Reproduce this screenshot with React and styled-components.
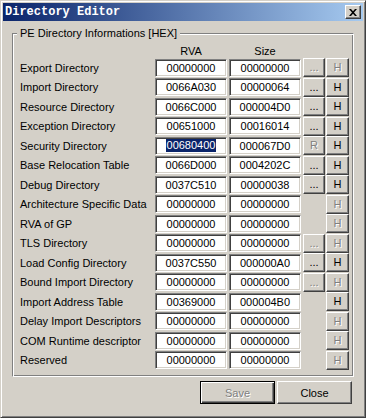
import React from 'react';
import styled, { createGlobalStyle } from 'styled-components';

const GlobalStyle = createGlobalStyle`
  html, body {
    margin: 0;
    padding: 0;
    background: #D4D0C8;
  }
  body {
    font-family: "Liberation Sans", Arial, sans-serif;
    font-size: 11px;
  }
`;

// classic window frame
const Window = styled.div`
  box-sizing: border-box;
  width: 366px;
  height: 418px;
  background: #D4D0C8;
  border: 1px solid;
  border-color: #D4D0C8 #404040 #404040 #D4D0C8;
  box-shadow: inset 1px 1px #fff, inset -1px -1px #808080;
  padding: 2px;
  display: flex;
  flex-direction: column;
`;

const TitleBar = styled.div`
  height: 18px;
  display: flex;
  align-items: center;
  justify-content: space-between;
  padding: 0 2px;
  background: linear-gradient(to right, #0A246A, #A6CAF0);
`;

const Title = styled.span`
  font-family: "Liberation Mono", "DejaVu Sans Mono", monospace;
  font-weight: bold;
  font-size: 12px;
  color: #fff;
`;

const CloseButton = styled.button`
  box-sizing: border-box;
  width: 16px;
  height: 14px;
  padding: 0;
  margin: 0;
  display: flex;
  align-items: center;
  justify-content: center;
  background: #D4D0C8;
  border: 1px solid;
  border-color: #fff #404040 #404040 #fff;
  box-shadow: inset -1px -1px #808080;
`;

const Body = styled.div`
  flex: 1;
  display: flex;
  flex-direction: column;
  padding: 6px 9px 0 9px;
`;

const GroupBox = styled.fieldset`
  margin: 0;
  padding: 0;
  min-width: 0;
  border: 1px solid;
  border-color: #808080 #fff #fff #808080;
  box-shadow: inset 1px 1px #fff, inset -1px -1px #808080;
`;

const Legend = styled.legend`
  margin-left: 4px;
  padding: 0 3px;
  line-height: 13px;
  font-size: 11px;
  color: #000;
  background: #D4D0C8;
`;

const Grid = styled.div`
  display: grid;
  grid-template-columns: 135px 74px 74px 23px 23px;
  grid-template-rows: 14px;
  grid-auto-rows: 19.5px;
  align-items: center;
  padding: 4px 4px 6px 7px;
`;

const HeaderCell = styled.div`
  width: 72px;
  text-align: center;
  line-height: 14px;
  color: #000;
`;

const Label = styled.div`
  color: #000;
  white-space: nowrap;
`;

const HexBox = styled.div`
  box-sizing: border-box;
  width: 72px;
  height: 18px;
  background: #fff;
  border: 1px solid;
  border-color: #808080 #fff #fff #808080;
  box-shadow: inset 1px 1px #404040, inset -1px -1px #D4D0C8;
  display: flex;
  align-items: center;
  justify-content: center;
  color: #000;
`;

const Selected = styled.span`
  display: inline-block;
  line-height: 13px;
  padding: 0 1px;
  background: #0A246A;
  color: #fff;
`;

const RowButton = styled.button`
  box-sizing: border-box;
  width: ${(p) => p.$w}px;
  height: 19px;
  padding: 0;
  margin: 0;
  font-family: inherit;
  font-size: 11px;
  line-height: 1;
  background: #D4D0C8;
  color: ${(p) => (p.disabled ? '#808080' : '#000')};
  text-shadow: ${(p) => (p.disabled ? '1px 1px #fff' : 'none')};
  border: 1px solid;
  border-color: #fff #404040 #404040 #fff;
  box-shadow: inset -1px -1px #808080;
`;

const Footer = styled.div`
  display: flex;
  justify-content: flex-end;
  gap: 2px;
  padding: 4px 2px 0 0;
`;

const DialogButton = styled.button`
  box-sizing: border-box;
  width: 75px;
  height: 23px;
  padding: 0;
  margin: 0;
  font-family: inherit;
  font-size: 11px;
  background: #D4D0C8;
  color: ${(p) => (p.disabled ? '#808080' : '#000')};
  text-shadow: ${(p) => (p.disabled ? '1px 1px #fff' : 'none')};
  border: 1px solid;
  border-color: ${(p) => (p.$default ? '#000' : '#fff #404040 #404040 #fff')};
  box-shadow: ${(p) =>
    p.$default
      ? 'inset 1px 1px #fff, inset -1px -1px #404040, inset -2px -2px #808080'
      : 'inset -1px -1px #808080'};
`;

const dirs = [
  { name: 'Export Directory', rva: '00000000', size: '00000000', dots: 'off', h: 'off' },
  { name: 'Import Directory', rva: '0066A030', size: '00000064', dots: 'on', h: 'on' },
  { name: 'Resource Directory', rva: '0066C000', size: '000004D0', dots: 'on', h: 'on' },
  { name: 'Exception Directory', rva: '00651000', size: '00016014', dots: 'on', h: 'on' },
  { name: 'Security Directory', rva: '00680400', size: '000067D0', dots: 'off', dotsText: 'R', h: 'on', selected: true },
  { name: 'Base Relocation Table', rva: '0066D000', size: '0004202C', dots: 'on', h: 'on' },
  { name: 'Debug Directory', rva: '0037C510', size: '00000038', dots: 'on', h: 'on' },
  { name: 'Architecture Specific Data', rva: '00000000', size: '00000000', dots: null, h: 'off' },
  { name: 'RVA of GP', rva: '00000000', size: '00000000', dots: null, h: 'off' },
  { name: 'TLS Directory', rva: '00000000', size: '00000000', dots: 'off', h: 'off' },
  { name: 'Load Config Directory', rva: '0037C550', size: '000000A0', dots: 'on', h: 'on' },
  { name: 'Bound Import Directory', rva: '00000000', size: '00000000', dots: 'off', h: 'off' },
  { name: 'Import Address Table', rva: '00369000', size: '000004B0', dots: null, h: 'on' },
  { name: 'Delay Import Descriptors', rva: '00000000', size: '00000000', dots: null, h: 'off' },
  { name: 'COM Runtime descriptor', rva: '00000000', size: '00000000', dots: null, h: 'off' },
  { name: 'Reserved', rva: '00000000', size: '00000000', dots: null, h: 'off' },
];

const XIcon = () => (
  <svg width="8" height="7" viewBox="0 0 8 7">
    <path d="M0 0h2l2 2.3L6 0h2L5 3.5 8 7H6L4 4.7 2 7H0l3-3.5z" fill="#000" />
  </svg>
);

const App = () => {
  return (
    <>
      <GlobalStyle />
      <Window>
        <TitleBar>
          <Title>Directory Editor</Title>
          <CloseButton aria-label="Close"><XIcon /></CloseButton>
        </TitleBar>
        <Body>
          <GroupBox>
            <Legend>PE Directory Informations [HEX]</Legend>
            <Grid>
              <div />
              <HeaderCell>RVA</HeaderCell>
              <HeaderCell>Size</HeaderCell>
              <div />
              <div />
              {dirs.map((d) => (
                <React.Fragment key={d.name}>
                  <Label>{d.name}</Label>
                  <HexBox>{d.selected ? <Selected>{d.rva}</Selected> : d.rva}</HexBox>
                  <HexBox>{d.size}</HexBox>
                  {d.dots ? (
                    <RowButton $w={22} disabled={d.dots === 'off'}>{d.dotsText || '...'}</RowButton>
                  ) : (
                    <div />
                  )}
                  <RowButton $w={23} disabled={d.h === 'off'}>H</RowButton>
                </React.Fragment>
              ))}
            </Grid>
          </GroupBox>
          <Footer>
            <DialogButton $default disabled>Save</DialogButton>
            <DialogButton>Close</DialogButton>
          </Footer>
        </Body>
      </Window>
    </>
  );
};

export default App;
